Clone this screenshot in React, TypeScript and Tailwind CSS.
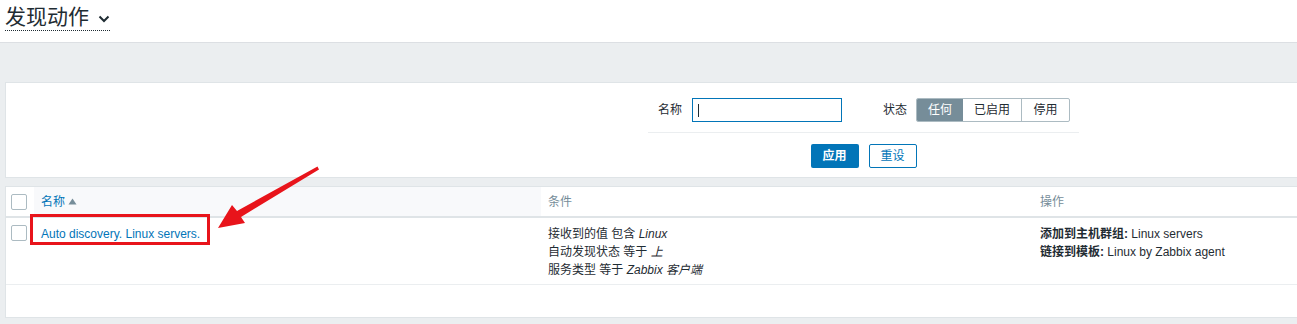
import React from 'react';

const font = { fontFamily: '"Liberation Sans", Arial, "Noto Sans CJK SC", sans-serif' };

const Checkbox = () => (
  <span className="inline-block w-[16px] h-[16px] border border-[#acbbc2] rounded-[2px] bg-white" />
);

const App: React.FC = () => {
  return (
    <div
      className="relative w-[1297px] h-[324px] overflow-hidden bg-[#ebeef0] text-[12px] text-[#1f2c33]"
      style={font}
    >
      {/* Page header */}
      <div className="h-[43px] bg-white border-b border-[#dcdfe3] pl-[5px] pt-[5px]">
        <div className="inline-flex items-center gap-[9px] border-b border-dotted border-[#1f2c33] pb-[1px]">
          <span className="text-[21px] leading-[24px] text-[#1f2c33]">发现动作</span>
          <svg width="12" height="8" viewBox="0 0 12 8" className="mt-[4px]">
            <path d="M1.5 1.5 L6 6 L10.5 1.5" fill="none" stroke="#1f2c33" strokeWidth="2" />
          </svg>
        </div>
      </div>

      {/* Filter */}
      <div className="mt-[39px] ml-[5px] w-[1340px] h-[96px] bg-white border border-[#dfe4e7]">
        <div className="ml-[642px] w-[431px] pt-[15px]">
          <div className="flex items-center h-[24px] border-b border-[#ebeef0] pb-[10px] box-content">
            <span className="w-[44px] shrink-0 pl-[10px] text-[#1f2c33]">名称</span>
            <div className="relative w-[150px] h-[24px] border border-[#0275b8] bg-white">
              <span className="absolute left-[5px] top-[5px] w-[1px] h-[13px] bg-[#1f2c33]" />
            </div>
            <span className="ml-[41px] w-[33px] shrink-0 text-[#1f2c33]">状态</span>
            <div className="flex h-[24px] border border-[#acbbc2] rounded-[2px] overflow-hidden">
              <span className="w-[46px] flex items-center justify-center bg-[#768d99] text-white">任何</span>
              <span className="w-[59px] flex items-center justify-center border-r border-[#acbbc2]">已启用</span>
              <span className="w-[47px] flex items-center justify-center">停用</span>
            </div>
          </div>
          <div className="flex justify-center gap-[10px] mt-[11px]">
            <button className="w-[48px] h-[24px] rounded-[2px] bg-[#0275b8] text-white font-bold">应用</button>
            <button className="w-[48px] h-[24px] rounded-[2px] border border-[#0275b8] text-[#0275b8] bg-white">重设</button>
          </div>
        </div>
      </div>

      {/* Table */}
      <div className="mt-[8px] ml-[5px] w-[1340px] h-[132px] bg-white border border-[#dfe4e7]">
        <div className="flex h-[31px] border-b-2 border-[#dfe4e7] text-[#768d99]">
          <div className="w-[28px] flex items-center pl-[5px]">
            <Checkbox />
          </div>
          <div className="w-[507px] flex items-center pl-[7px] bg-[#f8f9fb] text-[#0275b8]">
            名称
            <svg width="9" height="7" viewBox="0 0 9 7" className="ml-[3px]">
              <path d="M0.5 6.5 L4.5 0.5 L8.5 6.5 Z" fill="#768d99" />
            </svg>
          </div>
          <div className="w-[492px] flex items-center pl-[7px]">条件</div>
          <div className="flex-1 flex items-center pl-[7px]">操作</div>
        </div>
        <div className="flex h-[67px] border-b border-[#ebeef0] leading-[18px]">
          <div className="w-[28px] pl-[5px] pt-[7px]">
            <Checkbox />
          </div>
          <div className="w-[507px] pl-[7px] pt-[7px]">
            <span className="text-[#0275b8]">Auto discovery. Linux servers.</span>
          </div>
          <div className="w-[492px] pl-[7px] pt-[7px]">
            <div>
              接收到的值 包含 <i>Linux</i>
            </div>
            <div>
              自动发现状态 等于 <i>上</i>
            </div>
            <div>
              服务类型 等于 <i>Zabbix 客户端</i>
            </div>
          </div>
          <div className="flex-1 pl-[7px] pt-[7px]">
            <div>
              <b>添加到主机群组:</b> Linux servers
            </div>
            <div>
              <b>链接到模板:</b> Linux by Zabbix agent
            </div>
          </div>
        </div>
      </div>

      {/* Annotation overlay */}
      <div className="absolute left-[30px] top-[214px] w-[180px] h-[31px] border-[3px] border-[#e8141b]" />
      <svg className="absolute left-0 top-0" width="1297" height="324">
        <polygon
          points="317.5,166.5 237,211 232,205 218,228 245,223 241,217 319,169.5"
          fill="#e8141b"
        />
      </svg>
    </div>
  );
};

export default App;
